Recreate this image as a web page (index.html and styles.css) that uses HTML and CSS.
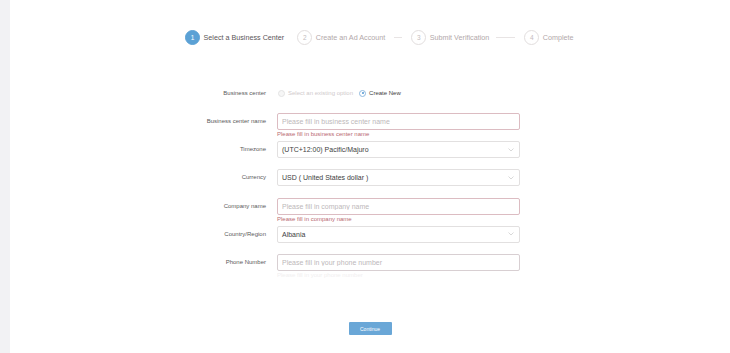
FILE: index.html
```html
<!DOCTYPE html>
<html lang="en">
<head>
<meta charset="utf-8">
<title>Create Business Center</title>
<link rel="stylesheet" href="styles.css">
</head>
<body>
<div class="page">
  <aside class="rail"></aside>
  <main class="main">
    <ol class="steps">
      <li class="step step-active step-first"><span class="step-num">1</span><span class="step-text">Select a Business Center</span></li>
      <li class="step"><span class="step-num">2</span><span class="step-text">Create an Ad Account</span></li>
      <li class="step-line step-line-short"></li>
      <li class="step step-third"><span class="step-num">3</span><span class="step-text">Submit Verification</span></li>
      <li class="step-line step-line-long"></li>
      <li class="step"><span class="step-num">4</span><span class="step-text">Complete</span></li>
    </ol>

    <form class="form">
      <div class="field">
        <label class="field-label">Business center</label>
        <div class="field-control">
          <div class="radios">
            <span class="radio radio-disabled"><span class="radio-dot"></span>Select an existing option</span>
            <span class="radio radio-checked"><span class="radio-dot"></span>Create New</span>
          </div>
          <div class="help"></div>
        </div>
      </div>

      <div class="field">
        <label class="field-label">Business center name</label>
        <div class="field-control">
          <input class="input input-error" type="text" placeholder="Please fill in business center name">
          <div class="help help-error">Please fill in business center name</div>
        </div>
      </div>

      <div class="field">
        <label class="field-label">Timezone</label>
        <div class="field-control">
          <div class="select"><span>(UTC+12:00) Pacific/Majuro</span><svg class="chev" width="6" height="4" viewBox="0 0 6 4"><polyline points="0.5,0.5 3,3 5.5,0.5" fill="none" stroke="#cfcfcf" stroke-width="0.8"/></svg></div>
          <div class="help"></div>
        </div>
      </div>

      <div class="field">
        <label class="field-label">Currency</label>
        <div class="field-control">
          <div class="select"><span>USD ( United States dollar )</span><svg class="chev" width="6" height="4" viewBox="0 0 6 4"><polyline points="0.5,0.5 3,3 5.5,0.5" fill="none" stroke="#cfcfcf" stroke-width="0.8"/></svg></div>
          <div class="help"></div>
        </div>
      </div>

      <div class="field">
        <label class="field-label">Company name</label>
        <div class="field-control">
          <input class="input input-error" type="text" placeholder="Please fill in company name">
          <div class="help help-error">Please fill in company name</div>
        </div>
      </div>

      <div class="field">
        <label class="field-label">Country/Region</label>
        <div class="field-control">
          <div class="select"><span>Albania</span><svg class="chev" width="6" height="4" viewBox="0 0 6 4"><polyline points="0.5,0.5 3,3 5.5,0.5" fill="none" stroke="#cfcfcf" stroke-width="0.8"/></svg></div>
          <div class="help"></div>
        </div>
      </div>

      <div class="field">
        <label class="field-label">Phone Number</label>
        <div class="field-control">
          <input class="input input-warn" type="text" placeholder="Please fill in your phone number">
          <div class="help help-ghost">Please fill in your phone number</div>
        </div>
      </div>
    </form>

    <div class="actions">
      <button class="btn" type="button">Continue</button>
    </div>
  </main>
</div>
</body>
</html>
```

FILE: styles.css
```css
* { box-sizing: border-box; }

html, body {
  margin: 0;
  padding: 0;
  background: #ffffff;
  font-family: "Liberation Sans", Arial, sans-serif;
}

.page {
  display: flex;
  width: 730px;
  height: 353px;
  overflow: hidden;
}

.rail {
  width: 10px;
  flex: 0 0 10px;
  background: #f2f2f4;
}

.main {
  flex: 1;
  display: flex;
  flex-direction: column;
}

/* Steps */
.steps {
  list-style: none;
  margin: 30px 0 0 175px;
  padding: 0;
  display: flex;
  align-items: center;
  height: 15px;
  gap: 9px;
}

.step {
  display: flex;
  align-items: center;
  gap: 3.5px;
}

.step-first { margin-right: 4px; }
.step-third { margin-right: -2px; }

.step-num {
  width: 15px;
  height: 15px;
  border-radius: 50%;
  border: 1px solid #e2dede;
  color: #c4bcbe;
  font-size: 6.5px;
  display: flex;
  align-items: center;
  justify-content: center;
}

.step-text {
  font-size: 7.2px;
  color: #b2a8aa;
  white-space: nowrap;
}

.step-active .step-num {
  background: #5ba1d5;
  border-color: #5ba1d5;
  color: #ffffff;
}

.step-active .step-text {
  color: #5a5658;
}

.step-line {
  height: 0;
  border-top: 1px solid #e8e4e4;
}

.step-line-short { width: 8px; }
.step-line-long { width: 19px; }

/* Form */
.form {
  margin: 39.5px 0 0 156px;
  display: flex;
  flex-direction: column;
}

.field {
  display: grid;
  grid-template-columns: 100px 243px;
  column-gap: 11px;
}

.field-label {
  height: 17px;
  line-height: 17px;
  text-align: right;
  font-size: 6px;
  color: #5a5a5a;
  white-space: nowrap;
}

.field-control {
  display: flex;
  flex-direction: column;
}

.help {
  height: 11.3px;
  font-size: 6px;
  line-height: 9px;
  white-space: nowrap;
}

.help-error { color: #b86a72; }
.help-ghost { color: #f1eff0; }

.input,
.select {
  width: 243px;
  height: 17px;
  border: 1px solid #e2e0e0;
  border-radius: 2px;
  background: #ffffff;
  padding: 0 0 0 4px;
  font-family: "Liberation Sans", Arial, sans-serif;
  font-size: 7px;
  color: #3e3e3e;
  outline: none;
  margin: 0;
}

.input::placeholder {
  color: #bdb8ba;
}

.input-error { border-color: #dcbcc2; }
.input-warn { border-color: #d8cfd2; }

.select {
  display: flex;
  align-items: center;
  justify-content: space-between;
  padding-right: 5px;
}

.chev { display: block; }

/* Radios */
.radios {
  height: 17px;
  display: flex;
  align-items: center;
  gap: 6px;
  padding-left: 1px;
  font-size: 6px;
}

.radio {
  display: flex;
  align-items: center;
  gap: 3px;
  white-space: nowrap;
}

.radio-dot {
  width: 7px;
  height: 7px;
  border-radius: 50%;
  border: 1px solid #e4e4e4;
  background: #f6f6f6;
  position: relative;
}

.radio-disabled { color: #cfcacc; }

.radio-checked { color: #3e3e3e; }

.radio-checked .radio-dot {
  border-color: #8fb9de;
  background: #ffffff;
}

.radio-checked .radio-dot::after {
  content: "";
  position: absolute;
  left: 1.5px;
  top: 1.5px;
  width: 2px;
  height: 2px;
  border-radius: 50%;
  background: #4f96d2;
}

/* Actions */
.actions {
  display: flex;
  justify-content: center;
  margin-top: 39.7px;
}

.btn {
  width: 43px;
  height: 13px;
  border: 0;
  border-radius: 1px;
  background: #6aa7d7;
  color: #ffffff;
  font-family: "Liberation Sans", Arial, sans-serif;
  font-size: 5px;
  padding: 0;
  margin: 0;
}
```
